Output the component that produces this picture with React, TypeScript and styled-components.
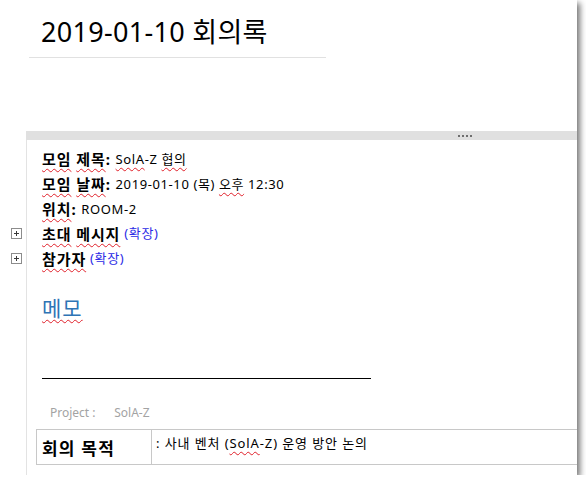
import React from 'react';
import styled, { createGlobalStyle } from 'styled-components';

const Global = createGlobalStyle`
  html, body { margin: 0; padding: 0; background: #fff; }
  body { font-family: "Noto Sans", "Noto Sans CJK KR", sans-serif; color: #000; }
`;

const Window = styled.div`
  width: 577px;
  height: 475px;
  background: #fff;
  box-shadow: 3px 3px 6px rgba(0, 0, 0, 0.55);
  overflow: hidden;
  display: flex;
  flex-direction: column;
`;

const Header = styled.header`
  height: 57px;
  box-sizing: border-box;
  padding: 13px 0 0 41px;
`;

const Title = styled.h1`
  margin: 0;
  font-size: 27px;
  font-weight: 400;
  line-height: 38px;
  letter-spacing: 0.3px;
`;

const TitleRule = styled.hr`
  margin: 0 0 73px 29px;
  width: 297px;
  height: 0;
  border: 0;
  border-top: 1px solid #e1e1e1;
`;

const Lower = styled.section`
  flex: 1;
  display: flex;
  flex-direction: column;
`;

const Row = styled.div<{ $h?: number; $grow?: boolean }>`
  display: grid;
  grid-template-columns: 26px 1fr;
  ${(p) => (p.$h ? `height: ${p.$h}px;` : '')}
  ${(p) => (p.$grow ? 'flex: 1;' : '')}
`;

const Gutter = styled.div`
  display: flex;
  align-items: center;
  padding-left: 11px;
`;

const Cell = styled.div`
  border-left: 1px solid #e3e3e3;
  padding-left: 15px;
  display: flex;
  align-items: center;
  min-width: 0;
`;

const BarCell = styled.div`
  background: #e0e0e0;
  display: flex;
  align-items: center;
  gap: 2px;
  padding-left: 432px;
`;

const Dot = styled.span`
  width: 2px;
  height: 2px;
  background: #6e6e6e;
`;

const Label = styled.span`
  font-size: 15px;
  font-weight: 700;
  white-space: pre;
  letter-spacing: 0.9px;
`;

const Value = styled.span`
  font-size: 13px;
  white-space: pre;
  letter-spacing: 0.6px;
`;

const Expand = styled.span`
  font-size: 13px;
  color: #2b2be6;
  margin-left: 4px;
  letter-spacing: 0.6px;
  position: relative;
  top: -1px;
`;

const Typo = styled.span`
  text-decoration: underline wavy #e0202a;
  text-decoration-thickness: 1px;
  text-underline-offset: 3px;
  text-decoration-skip-ink: none;
`;

const MemoCell = styled(Cell)`
  align-items: flex-start;
  flex-direction: column;
  padding-top: 22px;
`;

const MemoTitle = styled.h2`
  margin: 0;
  font-size: 21px;
  font-weight: 400;
  line-height: 30px;
  letter-spacing: 1px;
  color: #2e74b5;
`;

const Rule = styled.div`
  margin-top: 55px;
  width: 329px;
  border-top: 1px solid #000;
`;

const Project = styled.div`
  margin: 25px 0 0 14px;
  font-size: 12px;
  color: #a3a3a3;
  line-height: 18px;
  white-space: pre;
`;

const TableCell = styled(Cell)`
  padding-left: 9px;
  align-items: flex-start;
  flex-direction: column;
`;

const Table = styled.table`
  margin-top: 7px;
  border-collapse: collapse;
  width: 560px;
`;

const Th = styled.th`
  width: 115px;
  height: 35px;
  box-sizing: border-box;
  border: 1px solid #c8c8c8;
  text-align: left;
  padding: 0 0 0 5px;
  font-size: 17px;
  font-weight: 700;
  letter-spacing: 1.2px;
  vertical-align: middle;
`;

const Td = styled.td`
  border: 1px solid #c8c8c8;
  padding: 2px 0 0 4px;
  font-size: 13px;
  letter-spacing: 0.9px;
  vertical-align: top;
  line-height: 22px;
`;

const PlusIcon = () => (
  <svg width="11" height="11" viewBox="0 0 11 11">
    <rect x="0.5" y="0.5" width="10" height="10" fill="#fff" stroke="#8c8c8c" />
    <path d="M3 5.5h5M5.5 3v5" stroke="#3a3a3a" strokeWidth="1" />
  </svg>
);

export default function App() {
  return (
    <>
      <Global />
      <Window>
        <Header>
          <Title>2019-01-10 회의록</Title>
        </Header>
        <TitleRule />
        <Lower>
          <Row $h={9}>
            <div />
            <BarCell>
              <Dot />
              <Dot />
              <Dot />
              <Dot />
            </BarCell>
          </Row>
          <Row $h={6}>
            <div />
            <Cell />
          </Row>
          <Row $h={25}>
            <Gutter />
            <Cell>
              <Label>
                <Typo>모임</Typo> <Typo>제목</Typo>:{' '}
              </Label>
              <Value>
                <Typo>SolA</Typo>-Z <Typo>협의</Typo>
              </Value>
            </Cell>
          </Row>
          <Row $h={25}>
            <Gutter />
            <Cell>
              <Label>
                <Typo>모임</Typo> <Typo>날짜</Typo>:{' '}
              </Label>
              <Value>
                2019-01-10 (목) <Typo>오후</Typo> 12:30
              </Value>
            </Cell>
          </Row>
          <Row $h={25}>
            <Gutter />
            <Cell>
              <Label>
                <Typo>위치</Typo>:{' '}
              </Label>
              <Value>ROOM-2</Value>
            </Cell>
          </Row>
          <Row $h={25}>
            <Gutter>
              <PlusIcon />
            </Gutter>
            <Cell>
              <Label>
                <Typo>초대</Typo> <Typo>메시지</Typo>
              </Label>
              <Expand>(확장)</Expand>
            </Cell>
          </Row>
          <Row $h={25}>
            <Gutter>
              <PlusIcon />
            </Gutter>
            <Cell>
              <Label>
                <Typo>참가자</Typo>
              </Label>
              <Expand>(확장)</Expand>
            </Cell>
          </Row>
          <Row>
            <div />
            <MemoCell>
              <MemoTitle>
                <Typo>메모</Typo>
              </MemoTitle>
              <Rule />
            </MemoCell>
          </Row>
          <Row $grow>
            <div />
            <TableCell>
              <Project>{'Project :      SolA-Z'}</Project>
              <Table>
                <tbody>
                  <tr>
                    <Th>회의 목적</Th>
                    <Td>
                      : 사내 벤처 (<Typo>SolA</Typo>-Z) 운영 방안 논의
                    </Td>
                  </tr>
                </tbody>
              </Table>
            </TableCell>
          </Row>
        </Lower>
      </Window>
    </>
  );
}
